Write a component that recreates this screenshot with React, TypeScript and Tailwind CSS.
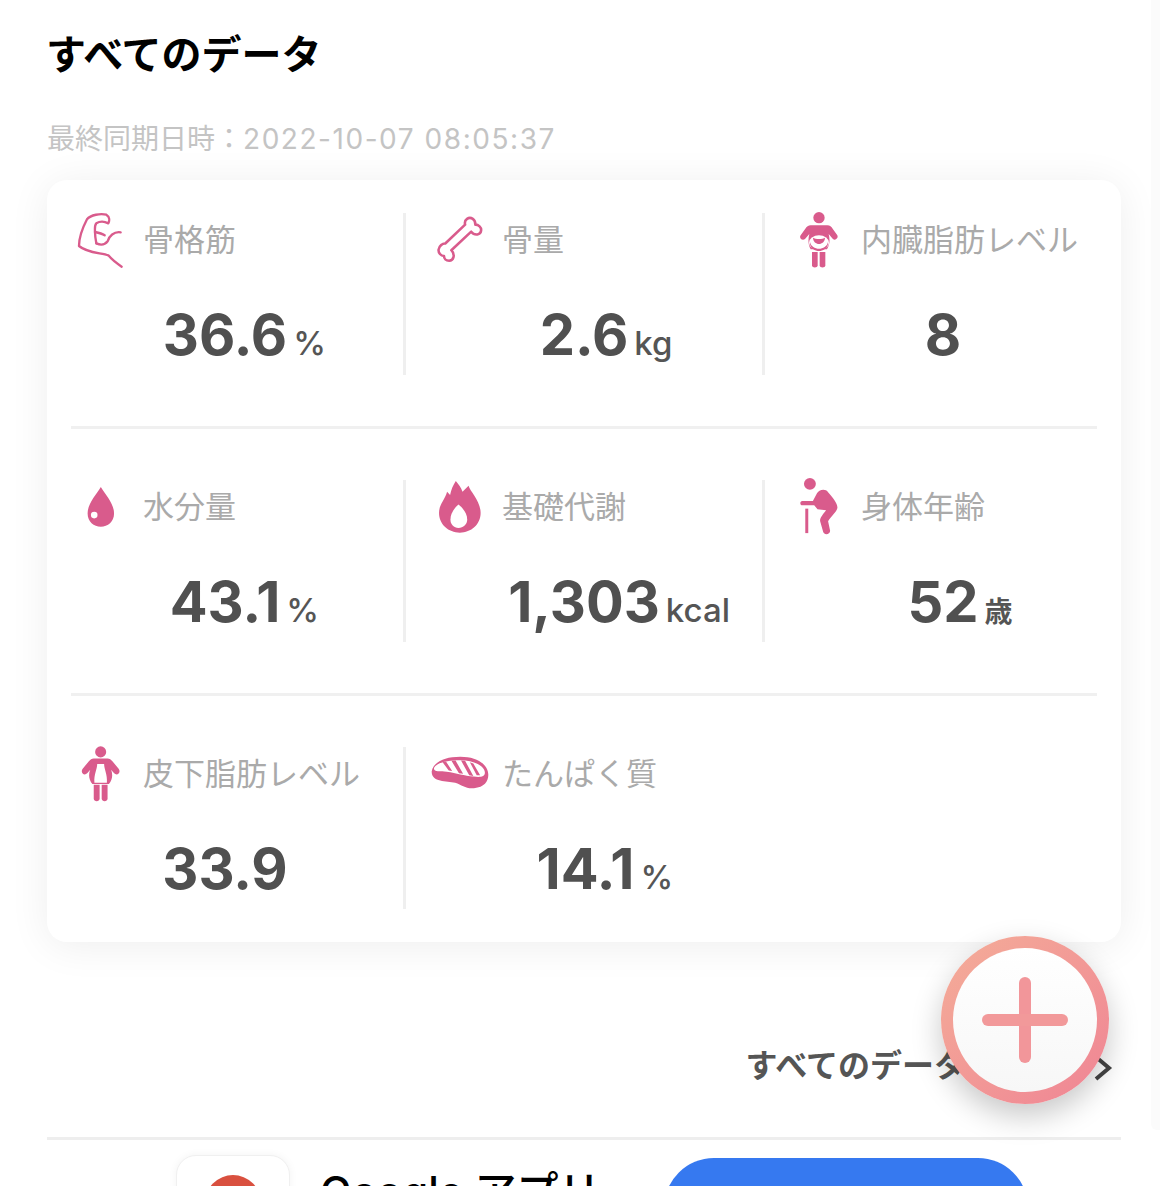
import type { ReactNode } from "react";

const PINK = "#d95b8c";

function Muscle() {
  return (
    <svg width="48" height="60" viewBox="54 30 144 180" fill="none" stroke={PINK} strokeWidth="7" strokeLinecap="round" strokeLinejoin="round">
      <path d="M188 200 C170 188 158 178 148 166 C130 158 85 160 60 138 C60 115 70 85 84 58 C95 44 125 40 142 44 C152 50 152 62 148 70 C140 66 125 62 112 70 C106 76 108 88 108 96 C108 110 110 120 112 130" />
      <path d="M108 96 C118 98 128 100 137 106" />
      <path d="M112 130 C125 136 138 134 146 124 C150 108 165 94 185 97" />
    </svg>
  );
}

function Bone() {
  return (
    <svg width="48" height="48" viewBox="45 45 150 150" fill="none" stroke={PINK} strokeWidth="8" strokeLinejoin="round">
      <path d="M74 131 L136 72 C132 56 148 46 160 54 C166 58 168 64 168 72 C178 72 187 80 186 90 C185 104 166 108 155 94 L93 152 C106 166 100 184 86 185 C76 185 70 178 70 170 C60 170 52 160 53 150 C55 138 66 130 74 131 Z" />
    </svg>
  );
}

function BellyPerson() {
  return (
    <svg width="40" height="58" viewBox="57 35 120 174" fill={PINK}>
      <circle cx="117" cy="55" r="17" />
      <path d="M92 78 L142 78 C150 78 154 82 158 88 L172 108 C176 116 166 126 158 118 L146 104 C150 120 150 135 141 150 L92 150 C84 135 84 120 88 104 L75 119 C67 126 56 116 62 108 L76 88 C80 82 85 78 92 78 Z" />
      <ellipse cx="117" cy="130" rx="30" ry="22" fill="#fff" />
      <path d="M99 115 C100 140 134 140 135 115 C128 120 106 120 99 115 Z" />
      <path d="M90 128 C95 155 139 155 144 128 L144 134 C139 162 95 162 90 134 Z" />
      <path d="M96 158 L113 158 L113 198 C113 207 96 207 96 198 Z" />
      <path d="M119 158 L136 158 L136 198 C136 207 119 207 119 198 Z" />
    </svg>
  );
}

function Drop() {
  return (
    <svg width="28" height="40" viewBox="55 50 81 121" fill={PINK}>
      <path d="M95 50 C110 75 135 100 135 130 C135 155 116 170 95 170 C74 170 55 155 55 130 C55 100 80 75 95 50 Z" />
      <circle cx="75" cy="135" r="10" fill="#fff" />
    </svg>
  );
}

function Flame() {
  return (
    <svg width="42" height="52" viewBox="42 30 125 155" fill={PINK}>
      <path d="M92 30 C100 40 108 50 112 62 L130 44 C134 60 166 90 166 125 C166 160 138 184 104 184 C70 184 42 160 42 125 C42 100 60 85 66 62 L75 72 C78 56 84 42 92 30 Z" />
      <path d="M100 100 C115 112 126 128 126 145 C126 160 114 170 100 170 C86 170 76 160 76 145 C76 128 86 112 100 100 Z" fill="#fff" />
    </svg>
  );
}

function Elder() {
  return (
    <svg width="38" height="60" viewBox="45 25 115 180" fill={PINK}>
      <circle cx="75" cy="45" r="18" />
      <path d="M52 97 L84 97 L96 74 C102 62 122 58 130 70 C145 88 160 105 158 118 C156 130 140 142 130 158 L136 186 C138 198 118 202 115 190 L106 158 C104 148 116 136 124 125 L98 122 L88 110 L52 110 C44 110 44 97 52 97 Z" />
      <rect x="61" y="120" width="9" height="74" />
    </svg>
  );
}

function FatPerson() {
  return (
    <svg width="40" height="56" viewBox="39 18 108 162" fill={PINK}>
      <circle cx="92" cy="35" r="16" />
      <path d="M72 54 L112 54 C118 54 122 58 126 62 L144 84 C152 94 140 106 131 97 L122 87 C128 100 126 115 116 128 L68 128 C58 115 56 100 62 87 L53 97 C44 106 32 94 40 84 L58 62 C62 58 66 54 72 54 Z" />
      <path d="M82 70 L102 70 C102 85 112 100 110 124 L74 124 C72 100 82 85 82 70 Z" fill="#fff" />
      <path d="M72 130 L89 130 L89 170 C89 180 72 180 72 170 Z" />
      <path d="M95 130 L112 130 L112 170 C112 180 95 180 95 170 Z" />
    </svg>
  );
}

function Meat() {
  return (
    <svg width="58" height="36" viewBox="24 40 170 105" fill={PINK}>
      <path d="M26 85 C30 60 60 42 110 42 C160 42 192 65 192 95 C192 115 180 132 150 134 C125 136 115 125 95 118 C70 112 26 118 26 85 Z" />
      <path d="M33 74 C40 60 70 52 110 52 C150 52 182 70 182 88 C182 102 166 102 150 100 C120 98 100 90 70 86 C50 84 30 88 33 74 Z" fill="#fff" />
      <path d="M58 58 L76 82 L86 84 L68 56 Z M84 54 L106 90 L118 92 L96 53 Z M112 53 L136 96 L148 98 L124 54 Z M138 58 L158 96 L168 96 L148 62 Z" />
    </svg>
  );
}

type Metric = { icon: ReactNode; label: string; value: string; unit?: string; unitBold?: boolean };

const rows: Metric[][] = [
  [
    { icon: <Muscle />, label: "骨格筋", value: "36.6", unit: "%" },
    { icon: <Bone />, label: "骨量", value: "2.6", unit: "kg" },
    { icon: <BellyPerson />, label: "内臓脂肪レベル", value: "8" },
  ],
  [
    { icon: <Drop />, label: "水分量", value: "43.1", unit: "%" },
    { icon: <Flame />, label: "基礎代謝", value: "1,303", unit: "kcal" },
    { icon: <Elder />, label: "身体年齢", value: "52", unit: "歳", unitBold: true },
  ],
  [
    { icon: <FatPerson />, label: "皮下脂肪レベル", value: "33.9" },
    { icon: <Meat />, label: "たんぱく質", value: "14.1", unit: "%" },
  ],
];

function MetricCell({ metric, divider }: { metric: Metric; divider: boolean }) {
  return (
    <div className={`h-[162px] ${divider ? "border-r-[3px] border-[#efefef]" : ""}`}>
      <div className="flex h-[53px] items-center">
        <div className="ml-[12px] flex w-[84px] shrink-0 justify-center">{metric.icon}</div>
        <span className="whitespace-nowrap text-[31px] leading-[53px] text-[#aaaaaa]">{metric.label}</span>
      </div>
      {/* number stays centred in the cell, the unit just hangs off its right side */}
      <div className="mt-[41px] grid grid-cols-[1fr_auto_1fr] items-baseline">
        <span className="col-start-2 text-[56px] leading-[56px] font-bold text-[#505050]">{metric.value}</span>
        {metric.unit && (
          <span className={`pl-[6px] ${metric.unitBold ? "text-[28px] font-bold" : "text-[33px] font-medium"} text-[#555555]`}>
            {metric.unit}
          </span>
        )}
      </div>
    </div>
  );
}

export default function App() {
  return (
    <div className="relative flex h-[1186px] w-[1169px] overflow-hidden bg-white font-['Inter','Noto_Sans_CJK_JP',sans-serif]">
      <div className="w-[1151px] shrink-0 pl-[47px] pr-[30px]">
        <h1 className="mt-[30px] -ml-[1px] text-[40px] leading-[50px] font-bold text-black">すべてのデータ</h1>
        <p className="mt-[40px] text-[28px] leading-[38px] text-[#c4c4c4]">
          最終同期日時：<span className="tracking-[1.55px]">2022-10-07 08:05:37</span>
        </p>

        <div className="mt-[22px] h-[762px] rounded-[20px] bg-white py-[33px] shadow-[0_4px_40px_rgba(0,0,0,0.07)]">
          {rows.map((row, i) => (
            <div key={i}>
              {i > 0 && <div className="mx-[24px] my-[51px] h-[3px] bg-[#f0f0f0]" />}
              <div className="grid grid-cols-[359px_359px_356px]">
                {row.map((m, j) => (
                  <MetricCell key={m.label} metric={m} divider={j < row.length - 1} />
                ))}
              </div>
            </div>
          ))}
        </div>

        <div className="mt-[102px] flex items-center justify-end pr-[7px]">
          <span className="text-[32px] leading-[44px] font-bold text-[#555555]">すべてのデータを見る</span>
          <svg width="22" height="28" viewBox="0 0 22 28" fill="none" stroke="#444444" strokeWidth="4" className="ml-[30px] mt-[3px]">
            <path d="M4 3 L17 14 L4 25" />
          </svg>
        </div>

        <div className="mt-[49px] h-[3px] bg-[#eeeeee]" />

        <div className="flex">
          <div className="ml-[129px] mt-[15px] flex h-[114px] w-[114px] shrink-0 justify-center rounded-[20px] border border-[#f0f0f0] bg-white pt-[19px] shadow-[0_0_8px_rgba(0,0,0,0.05)]">
            <div className="h-[56px] w-[56px] rounded-full bg-[#d9503f]" />
          </div>
          <span className="ml-[30px] mt-[24px] whitespace-nowrap text-[42px] leading-[56px] font-medium text-black">Google アプリ</span>
          <div className="ml-auto mr-[93px] mt-[18px] h-[120px] w-[364px] rounded-[50px] bg-[#3679f0]" />
        </div>
      </div>

      <div className="h-[1130px] w-[9px] rounded-bl-[6px] bg-[#fbfbfb]" />

      <button
        type="button"
        className="absolute left-[941px] top-[936px] flex h-[168px] w-[168px] items-center justify-center rounded-full bg-gradient-to-br from-[#f4ad98] to-[#ef8494] shadow-[0_12px_30px_rgba(0,0,0,0.22)]"
      >
        <span className="flex h-[144px] w-[144px] items-center justify-center rounded-full bg-gradient-to-b from-white to-[#f7f7f7]">
          <svg width="88" height="88" viewBox="0 0 88 88">
            <path d="M44 7 V81" stroke="#f2969a" strokeWidth="12" strokeLinecap="round" />
            <path d="M7 44 H81" stroke="#f2999a" strokeWidth="12" strokeLinecap="round" />
          </svg>
        </span>
      </button>
    </div>
  );
}
